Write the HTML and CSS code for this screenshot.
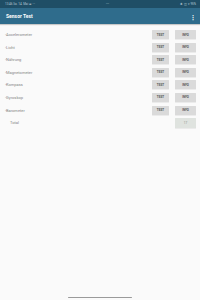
FILE: index.html
```html
<!DOCTYPE html>
<html>
<head>
<meta charset="utf-8">
<link rel="stylesheet" href="styles.css">
</head>
<body>
<div class="screen">
  <div class="status">
    <span class="st-left">13:46 So. 14. Mai ⊕ ···</span>
    <span class="st-mid">•••</span>
    <span class="st-right">✱ ◫ ▾ 95%</span>
  </div>
  <div class="appbar">
    <span class="title">Sensor Test</span>
    <span class="menu">⋮</span>
  </div>
  <div class="list">
    <div class="row"><span class="label">-Accelerometer</span><span class="btn test">TEST</span><span class="btn info">INFO</span></div>
    <div class="row"><span class="label">-Licht</span><span class="btn test">TEST</span><span class="btn info">INFO</span></div>
    <div class="row"><span class="label">-Nährung</span><span class="btn test">TEST</span><span class="btn info">INFO</span></div>
    <div class="row"><span class="label">-Magnetometer</span><span class="btn test">TEST</span><span class="btn info">INFO</span></div>
    <div class="row"><span class="label">-Kompass</span><span class="btn test">TEST</span><span class="btn info">INFO</span></div>
    <div class="row"><span class="label">-Gyroskop</span><span class="btn test">TEST</span><span class="btn info">INFO</span></div>
    <div class="row"><span class="label">-Barometer</span><span class="btn test">TEST</span><span class="btn info">INFO</span></div>
    <div class="row total"><span class="label">Total</span><span class="btn sum">17</span></div>
  </div>
  <div class="spacer"></div>
  <div class="navbar"><div class="home"></div></div>
</div>
</body>
</html>
```
FILE: styles.css
```css
html, body {
  margin: 0;
  padding: 0;
  background: #fafafa;
}
.screen {
  width: 200px;
  height: 300px;
  display: flex;
  flex-direction: column;
  font-family: Roboto, "Liberation Sans", sans-serif;
  overflow: hidden;
}
.status {
  height: 8px;
  background: #1f4e66;
  display: flex;
  align-items: center;
  justify-content: space-between;
  padding: 0 4px 0 5px;
  color: #b8cbd6;
  font-size: 3px;
  line-height: 8px;
}
.st-mid {
  color: #7f9fb0;
}
.appbar {
  height: 16px;
  background: #2f6c8c;
  display: flex;
  align-items: center;
  justify-content: space-between;
  padding: 0 4px 0 6px;
  box-shadow: 0 1px 1px rgba(0,0,0,0.2);
  position: relative;
  z-index: 1;
}
.title {
  color: #ffffff;
  font-size: 5px;
  font-weight: 700;
}
.menu {
  color: #ffffff;
  font-size: 6px;
  font-weight: 700;
}
.list {
  display: flex;
  flex-direction: column;
  gap: 3.6px;
  padding: 6px 4px 0 5px;
}
.row {
  height: 9px;
  display: flex;
  align-items: center;
}
.label {
  flex: 1;
  color: #858585;
  font-size: 4px;
}
.total .label {
  padding-left: 5px;
}
.btn {
  height: 9px;
  display: flex;
  align-items: center;
  justify-content: center;
  background: #dadada;
  color: #555555;
  font-size: 3px;
  font-weight: 700;
  border-radius: 0.5px;
  box-shadow: 0 0.5px 0.5px rgba(0,0,0,0.12);
}
.test {
  width: 17px;
  margin-right: 6px;
}
.info {
  width: 21px;
}
.sum {
  width: 21px;
  height: 10px;
  background: #dfe3df;
  color: #8a8f8a;
  font-weight: 400;
}
.spacer {
  flex: 1;
}
.navbar {
  height: 5px;
  display: flex;
  justify-content: center;
  align-items: flex-start;
}
.home {
  width: 64px;
  height: 1.5px;
  background: #9a9a9a;
  border-radius: 1px;
  margin-top: 1.5px;
}
```
